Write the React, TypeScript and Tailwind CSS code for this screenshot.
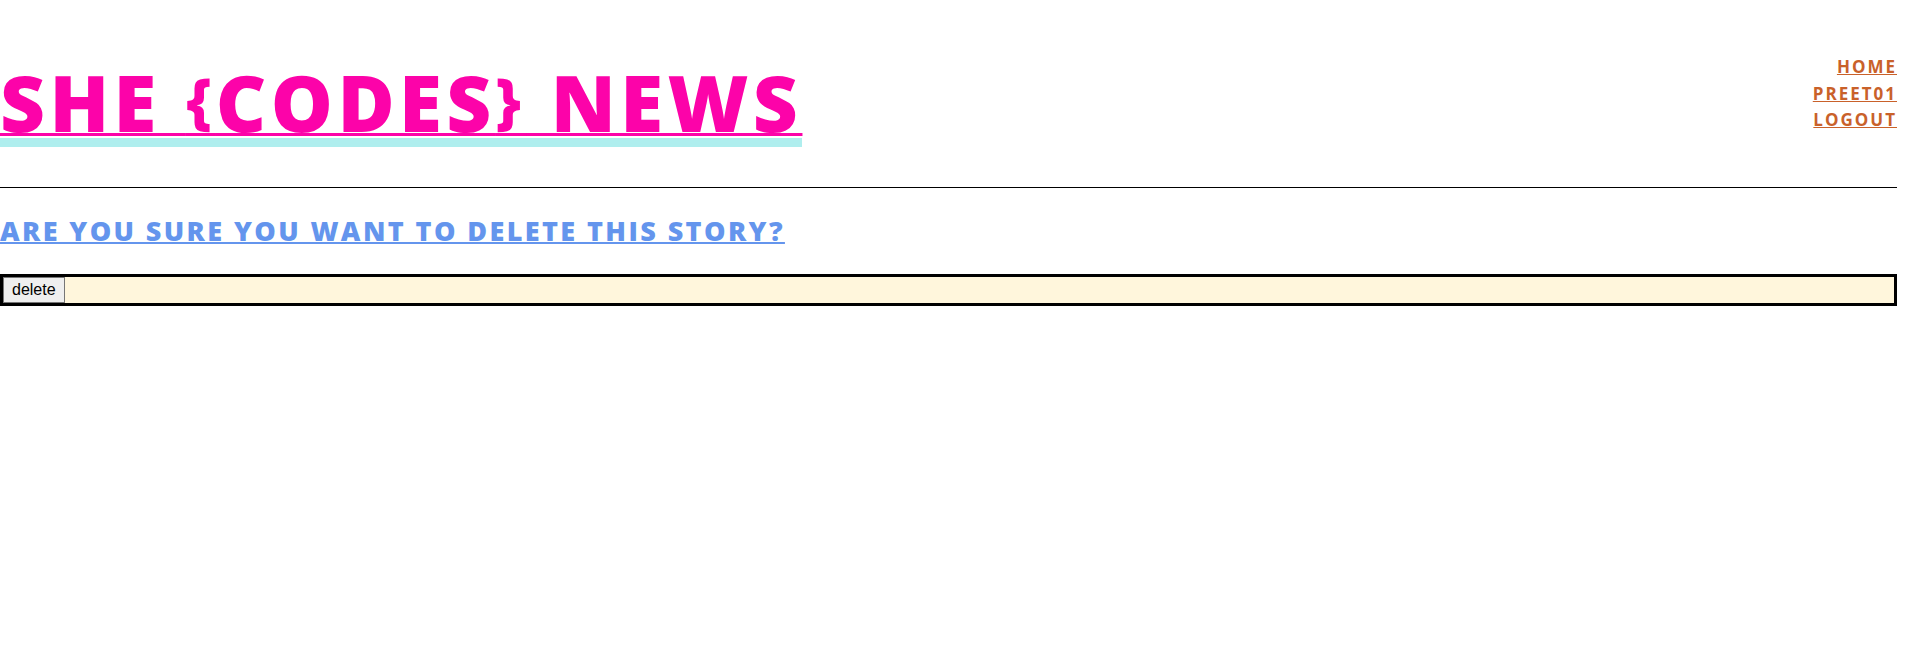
import React from 'react';

const Brace: React.FC<{ ch: string }> = ({ ch }) => (
  <span className="relative -top-[10px] text-[60px] leading-[0px]">{ch}</span>
);

const App: React.FC = () => {
  return (
    <div className="min-h-screen bg-white pr-[8px]" style={{ fontFamily: '"Open Sans", "Liberation Sans", sans-serif' }}>
      <header className="flex justify-between items-start pt-[52px]">
        <h1 className="mt-[18px] text-[78px] leading-[64px] font-extrabold uppercase text-[#fc03a9] underline decoration-[3px] underline-offset-[1px] border-b-[9px] border-[#afeeee] pb-[4px] tracking-[4.4px]">
          <a href="#">She <Brace ch="{" />Codes<Brace ch="}" /> News</a>
        </h1>
        <nav className="flex flex-col items-end pt-[2px] text-[17px] leading-[26.5px] font-bold uppercase tracking-[2px] text-[#c9612a]">
          <a href="#" className="underline">Home</a>
          <a href="#" className="underline">preet01</a>
          <a href="#" className="underline">Logout</a>
        </nav>
      </header>

      <hr className="mt-[40px] border-t border-black" />

      <h2 className="mt-[26px] text-[27px] leading-[34px] font-extrabold uppercase tracking-[2.4px] text-[#6495ed] underline decoration-[2px]">
        Are you sure you want to delete this story?
      </h2>

      <form className="mt-[26px] border-[3px] border-black bg-[#fff6dc] flex">
        <button
          type="submit"
          className="h-[26px] px-[8px] bg-[#efefef] border border-[#767676] text-[16px] text-black"
          style={{ fontFamily: '"Liberation Sans", Arial, sans-serif' }}
        >
          delete
        </button>
      </form>
    </div>
  );
};

export default App;
